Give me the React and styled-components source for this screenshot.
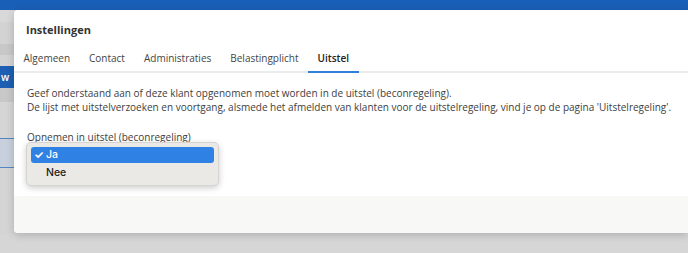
import React from "react";
import styled, { createGlobalStyle } from "styled-components";

const Global = createGlobalStyle`
  html, body { margin: 0; padding: 0; background: #d4d4d4; }
  body { font-family: "Open Sans", "Liberation Sans", sans-serif; }
`;

const Page = styled.div`
  position: relative;
  width: 688px;
  height: 253px;
  overflow: hidden;
  background: #d4d4d4;
`;

const Backdrop = styled.div`
  display: flex;
  flex-direction: column;
  height: 100%;
`;

const Band = styled.div`
  height: ${(p) => p.$h}px;
  background: ${(p) => p.$bg};
  border-top: ${(p) => (p.$line ? `1px solid ${p.$line}` : "none")};
  border-bottom: ${(p) => (p.$line ? `1px solid ${p.$line}` : "none")};
  color: #fff;
  font-size: 10px;
  line-height: ${(p) => p.$h}px;
  box-sizing: border-box;
  flex: ${(p) => (p.$grow ? 1 : "none")};
`;

const BandText = styled.span`
  display: inline-block;
  padding-left: 1px;
  font-weight: 600;
`;

const Modal = styled.div`
  position: absolute;
  left: 14px;
  top: 10px;
  right: 0;
  height: 223px;
  background: #fff;
  border-radius: 4px 0 0 4px;
  box-shadow: 0 2px 8px rgba(0, 0, 0, 0.18);
  display: flex;
  flex-direction: column;
  overflow: hidden;
`;

const Title = styled.div`
  height: 38px;
  display: flex;
  align-items: center;
  padding-left: 12px;
  font-size: 11px;
  font-weight: 700;
  color: #333;
`;

const Tabs = styled.div`
  display: flex;
  height: 25px;
  border-bottom: 2px solid #ececec;
  box-sizing: border-box;
`;

const Tab = styled.div`
  padding: 0 9.5px;
  font-size: 10px;
  color: ${(p) => (p.$active ? "#222" : "#444")};
  font-weight: ${(p) => (p.$active ? 600 : 400)};
  line-height: 20px;
  border-bottom: 2px solid ${(p) => (p.$active ? "#2f7fd8" : "transparent")};
  margin-bottom: -2px;
`;

const Body = styled.div`
  flex: 1;
  padding: 13px 13px 0;
  font-size: 10px;
  color: #404040;
  line-height: 14px;
  white-space: nowrap;
`;

const Para = styled.p`
  margin: 0;
`;

const Label = styled.div`
  margin-top: 16px;
`;

const Footer = styled.div`
  height: 37px;
  background: #f8f8f7;
`;

const Menu = styled.div`
  position: absolute;
  left: 26px;
  top: 142px;
  width: 193px;
  height: 44px;
  box-sizing: border-box;
  padding: 4px 4px;
  background: #ebe9e6;
  border: 1px solid #d6d4d1;
  border-radius: 5px;
  box-shadow: 0 2px 6px rgba(0, 0, 0, 0.2);
  font-size: 10.5px;
  font-family: "Inter", "Open Sans", sans-serif;
  display: flex;
  flex-direction: column;
`;

const Option = styled.div`
  height: 16px;
  line-height: 16px;
  border-radius: 3px;
  padding-left: 15px;
  display: flex;
  align-items: center;
  font-weight: 500;
  color: ${(p) => (p.$selected ? "#fff" : "#222")};
  background: ${(p) => (p.$selected ? "#2f81e4" : "transparent")};
  margin-bottom: ${(p) => (p.$selected ? "2px" : 0)};
`;

const Check = styled.span`
  width: 12px;
  margin-left: -12px;
  font-size: 11px;
  font-weight: 700;
`;

const tabs = ["Algemeen", "Contact", "Administraties", "Belastingplicht", "Uitstel"];

export default function App() {
  return (
    <Page>
      <Global />
      <Backdrop>
        <Band $h={10} $bg="#1a5fb7" />
        <Band $h={12} $bg="#d9d9d9" />
        <Band $h={22} $bg="#d3d3d3" />
        <Band $h={11} $bg="#c8c8c8" />
        <Band $h={11} $bg="#d3d3d3" />
        <Band $h={22} $bg="#1d5fb3">
          <BandText>w</BandText>
        </Band>
        <Band $h={14} $bg="#c8c8c8" />
        <Band $h={36} $bg="#d5d5d5" />
        <Band $h={30} $bg="#c7d0dc" $line="#5585c2" />
        <Band $h={65} $bg="#d4d4d4" />
        <Band $grow $bg="#d6d6d6" />
      </Backdrop>
      <Modal>
        <Title>Instellingen</Title>
        <Tabs>
          {tabs.map((t) => (
            <Tab key={t} $active={t === "Uitstel"}>
              {t}
            </Tab>
          ))}
        </Tabs>
        <Body>
          <Para>Geef onderstaand aan of deze klant opgenomen moet worden in de uitstel (beconregeling).</Para>
          <Para>
            De lijst met uitstelverzoeken en voortgang, alsmede het afmelden van klanten voor de uitstelregeling, vind je op de pagina 'Uitstelregeling'.
          </Para>
          <Label>Opnemen in uitstel (beconregeling)</Label>
        </Body>
        <Footer />
      </Modal>
      <Menu>
        <Option $selected>
          <Check>✓</Check>Ja
        </Option>
        <Option>Nee</Option>
      </Menu>
    </Page>
  );
}
